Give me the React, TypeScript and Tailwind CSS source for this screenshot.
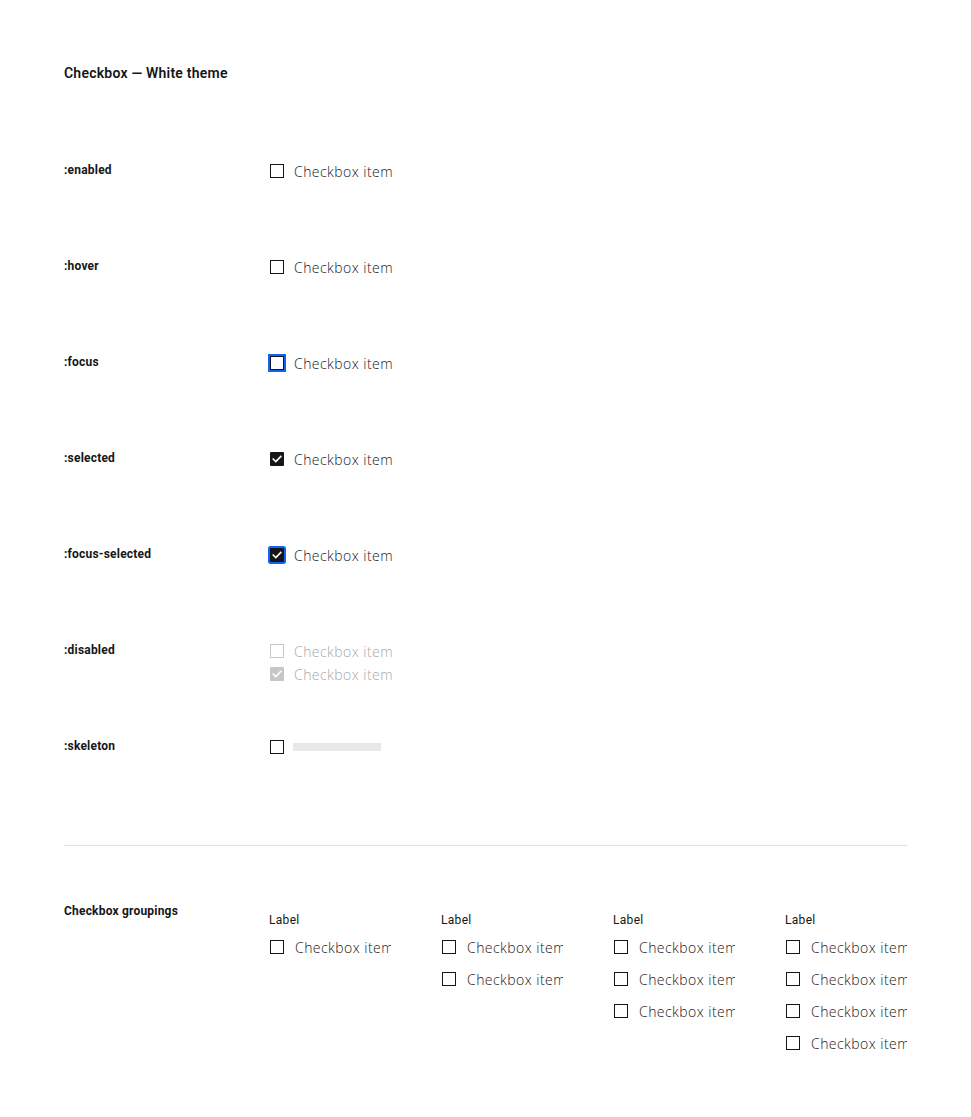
import React from "react";

type BoxState = "enabled" | "focus" | "selected" | "focus-selected" | "disabled" | "disabled-selected" | "skeleton";

const Check = ({ color = "#ffffff" }: { color?: string }) => (
  <svg width="10" height="8" viewBox="0 0 10 8" fill="none">
    <path d="M1.2 4.1 L3.8 6.6 L8.8 1.4" stroke={color} strokeWidth="1.6" strokeLinecap="square" />
  </svg>
);

const Box = ({ state = "enabled" }: { state?: BoxState }) => {
  const base = "flex items-center justify-center w-[14px] h-[14px] shrink-0 ml-[1px]";
  if (state === "selected")
    return (
      <span className={`${base} bg-[#161616] rounded-[1px]`}>
        <Check />
      </span>
    );
  if (state === "focus-selected")
    return (
      <span className={`${base} bg-[#161616] rounded-[1px] ring-2 ring-[#0f62fe]`}>
        <Check />
      </span>
    );
  if (state === "focus")
    return <span className={`${base} border border-[#161616] ring-2 ring-[#0f62fe]`} />;
  if (state === "disabled") return <span className={`${base} border border-[#c6c6c6]`} />;
  if (state === "disabled-selected")
    return (
      <span className={`${base} bg-[#c6c6c6] rounded-[1px]`}>
        <Check />
      </span>
    );
  if (state === "skeleton") return <span className={`${base} border-[1.5px] border-[#161616]`} />;
  return <span className={`${base} border border-[#161616]`} />;
};

const itemText = "text-[14px] font-light tracking-[0.45px] whitespace-nowrap font-['Open_Sans',sans-serif]";

const Item = ({ state = "enabled" }: { state?: BoxState }) => {
  const disabled = state === "disabled" || state === "disabled-selected";
  return (
    <div className="flex items-center h-[20px] gap-[10px]">
      <Box state={state} />
      {state === "skeleton" ? (
        <span className="block w-[88px] h-[8px] bg-[#e8e8e8] ml-[-1px]" />
      ) : (
        <span className={`${itemText} ${disabled ? "text-[#a8a8a8]" : "text-[#161616]"}`}>Checkbox item</span>
      )}
    </div>
  );
};

const rows: { label: string; states: BoxState[] }[] = [
  { label: ":enabled", states: ["enabled"] },
  { label: ":hover", states: ["enabled"] },
  { label: ":focus", states: ["focus"] },
  { label: ":selected", states: ["selected"] },
  { label: ":focus-selected", states: ["focus-selected"] },
  { label: ":disabled", states: ["disabled", "disabled-selected"] },
  { label: ":skeleton", states: ["skeleton"] },
];

const groups = [1, 2, 3, 4];

export default function App() {
  return (
    <div className="bg-white min-h-[1117px] px-16 pt-16 font-['Roboto',sans-serif] text-[#161616]">
      <h1 className="text-[14px] leading-[18px] font-semibold tracking-[0.22px]">Checkbox — White theme</h1>

      <div className="mt-[80px] flex flex-col">
        {rows.map((r) => (
          <div key={r.label} className="flex h-[96px]">
            <div className="w-[205px] text-[12px] leading-[16px] font-bold tracking-[0.2px] shrink-0">{r.label}</div>
            <div className="flex flex-col gap-[3px] -mt-[1px]">
              {r.states.map((s, i) => (
                <Item key={i} state={s} />
              ))}
            </div>
          </div>
        ))}
      </div>

      <div className="mt-[11px] h-px bg-[#e0e0e0]" />

      <div className="flex mt-[57px]">
        <div className="w-[205px] shrink-0 text-[12px] leading-[16px] font-bold tracking-[0.2px]">Checkbox groupings</div>
        <div className="flex gap-[50px] mt-[9px]">
          {groups.map((n) => (
            <div key={n} className="w-[122px] overflow-hidden">
              <div className="text-[12px] leading-[16px] tracking-[0.3px] text-[#161616] mb-[3px]">Label</div>
              {Array.from({ length: n }).map((_, i) => (
                <div key={i} className="h-[32px] flex items-center">
                  <div className="flex items-center gap-[11px]">
                    <Box />
                    <span className={`${itemText} text-[#161616]`}>Checkbox item</span>
                  </div>
                </div>
              ))}
            </div>
          ))}
        </div>
      </div>
    </div>
  );
}
